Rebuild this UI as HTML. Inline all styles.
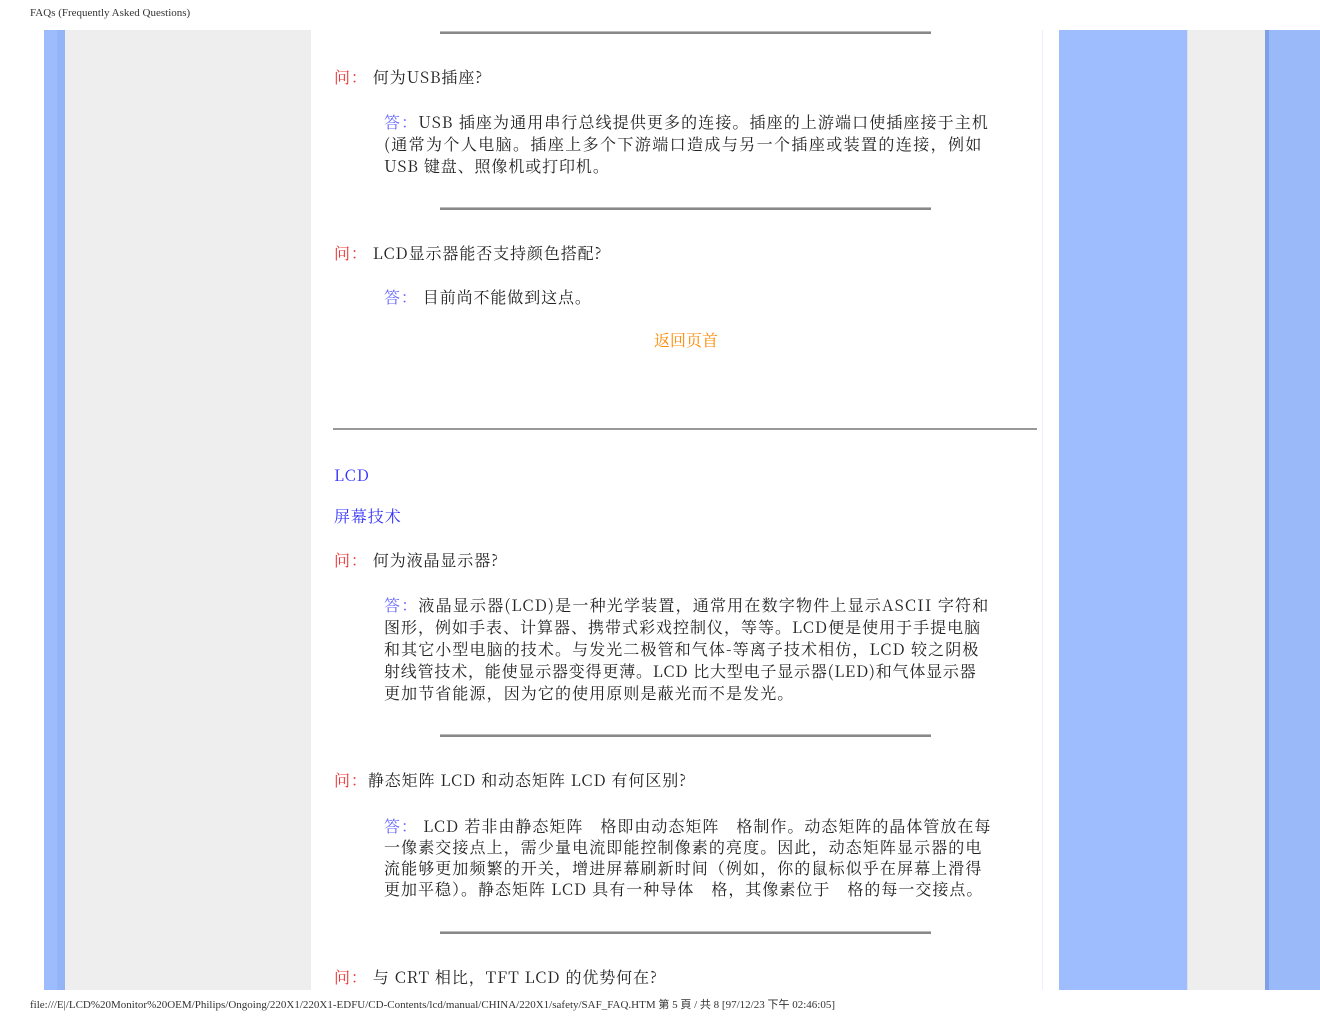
<!DOCTYPE html>
<html><head><meta charset="utf-8"><style>
body{margin:0;width:1320px;height:1020px;position:relative;background:#fff;overflow:hidden;font-family:"Noto Serif CJK SC","Liberation Serif",serif;font-size:16px;color:#222}
.a{position:absolute;white-space:nowrap;line-height:22px;letter-spacing:0.9px}
.r{position:absolute;left:440px;width:491px;height:3px;background:#888;border-top:1px solid #bbb;box-sizing:border-box}
.q{color:#e33}.d{color:#66f}
.s{font-family:"Liberation Serif",serif;font-size:11px;color:#333;position:absolute;white-space:nowrap}
</style></head><body>
<div class="s" style="left:30px;top:7px">FAQs (Frequently Asked Questions)</div>
<div style="position:absolute;left:44px;top:30px;width:13px;height:960px;background:#9dbcfd"></div>
<div style="position:absolute;left:57px;top:30px;width:8px;height:960px;background:#94b4f8"></div>
<div style="position:absolute;left:65px;top:30px;width:246px;height:960px;background:#eee"></div>
<div style="position:absolute;left:1042px;top:30px;width:1px;height:960px;background:#eef"></div>
<div style="position:absolute;left:1059px;top:30px;width:128px;height:960px;background:#9dbdfe"></div>
<div style="position:absolute;left:1187px;top:30px;width:78px;height:960px;background:#eee;border-left:1px solid #dde"></div>
<div style="position:absolute;left:1265px;top:30px;width:4px;height:960px;background:#7f9fe6"></div>
<div style="position:absolute;left:1269px;top:30px;width:51px;height:960px;background:#9ab9f8"></div>

<div class="r" style="top:31px"></div>
<div class="a" style="left:334px;top:66px"><span class="q">问：</span> 何为USB插座?</div>
<div class="a" style="left:384px;top:111px;letter-spacing:1.1px"><span class="d">答：</span>USB 插座为通用串行总线提供更多的连接。插座的上游端口使插座接于主机</div>
<div class="a" style="left:384px;top:133px;letter-spacing:1.4px">(通常为个人电脑。插座上多个下游端口造成与另一个插座或装置的连接，例如</div>
<div class="a" style="left:384px;top:155px">USB 键盘、照像机或打印机。</div>
<div class="r" style="top:207px"></div>
<div class="a" style="left:334px;top:242px"><span class="q">问：</span> LCD显示器能否支持颜色搭配?</div>
<div class="a" style="left:384px;top:286px"><span class="d">答：</span> 目前尚不能做到这点。</div>
<div class="a" style="left:654px;top:329px;color:#f80;letter-spacing:0">返回页首</div>
<div style="position:absolute;left:333px;top:428px;width:704px;height:2px;background:#999"></div>
<div class="a" style="left:334px;top:464px;color:#33f">LCD</div>
<div class="a" style="left:334px;top:505px;color:#33f">屏幕技术</div>
<div class="a" style="left:334px;top:549px"><span class="q">问：</span> 何为液晶显示器?</div>
<div class="a" style="left:384px;top:594px;letter-spacing:1.2px"><span class="d">答：</span>液晶显示器(LCD)是一种光学装置，通常用在数字物件上显示ASCII 字符和</div>
<div class="a" style="left:384px;top:616px;letter-spacing:1.0px">图形，例如手表、计算器、携带式彩戏控制仪，等等。LCD便是使用于手提电脑</div>
<div class="a" style="left:384px;top:638px;letter-spacing:1.1px">和其它小型电脑的技术。与发光二极管和气体-等离子技术相仿，LCD 较之阴极</div>
<div class="a" style="left:384px;top:660px;letter-spacing:0.8px">射线管技术，能使显示器变得更薄。LCD 比大型电子显示器(LED)和气体显示器</div>
<div class="a" style="left:384px;top:682px;letter-spacing:1.1px">更加节省能源，因为它的使用原则是蔽光而不是发光。</div>
<div class="r" style="top:734px"></div>
<div class="a" style="left:334px;top:769px"><span class="q">问：</span>静态矩阵 LCD 和动态矩阵 LCD 有何区别?</div>
<div class="a" style="left:384px;top:815px;letter-spacing:1.0px"><span class="d">答：</span> LCD 若非由静态矩阵　格即由动态矩阵　格制作。动态矩阵的晶体管放在每</div>
<div class="a" style="left:384px;top:836px;letter-spacing:1.1px">一像素交接点上，需少量电流即能控制像素的亮度。因此，动态矩阵显示器的电</div>
<div class="a" style="left:384px;top:857px;letter-spacing:1.1px">流能够更加频繁的开关，增进屏幕刷新时间（例如，你的鼠标似乎在屏幕上滑得</div>
<div class="a" style="left:384px;top:878px;letter-spacing:1.0px">更加平稳）。静态矩阵 LCD 具有一种导体　格，其像素位于　格的每一交接点。</div>
<div class="r" style="top:931px"></div>
<div class="a" style="left:334px;top:966px"><span class="q">问：</span> 与 CRT 相比，TFT LCD 的优势何在?</div>
<div class="s" style="left:30px;top:996px">file:///E|/LCD%20Monitor%20OEM/Philips/Ongoing/220X1/220X1-EDFU/CD-Contents/lcd/manual/CHINA/220X1/safety/SAF_FAQ.HTM 第 5 頁 / 共 8 [97/12/23 下午 02:46:05]</div>
</body></html>
